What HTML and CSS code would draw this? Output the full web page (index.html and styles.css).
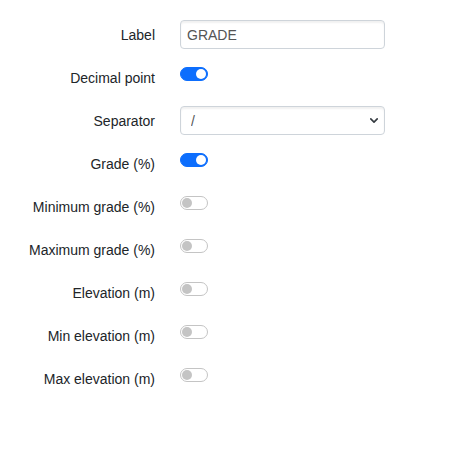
FILE: index.html
```html
<!DOCTYPE html>
<html lang="en">
<head>
    <meta charset="UTF-8">
    <meta name="viewport" content="width=device-width, initial-scale=1.0">
    <title>Grade settings</title>
    <link rel="stylesheet" href="styles.css">
</head>
<body>
    <form class="settings">
        <div class="row">
            <label class="row-label" for="label">Label</label>
            <input type="text" id="label" class="field" value="GRADE">
        </div>

        <div class="row">
            <label class="row-label" for="decimal">Decimal point</label>
            <input type="checkbox" id="decimal" class="switch" checked>
        </div>

        <div class="row">
            <label class="row-label" for="separator">Separator</label>
            <select id="separator" class="field select">
                <option>/</option>
                <option>:</option>
                <option>-</option>
            </select>
        </div>

        <div class="row">
            <label class="row-label" for="grade">Grade (%)</label>
            <input type="checkbox" id="grade" class="switch" checked>
        </div>

        <div class="row">
            <label class="row-label" for="min-grade">Minimum grade (%)</label>
            <input type="checkbox" id="min-grade" class="switch">
        </div>

        <div class="row">
            <label class="row-label" for="max-grade">Maximum grade (%)</label>
            <input type="checkbox" id="max-grade" class="switch">
        </div>

        <div class="row">
            <label class="row-label" for="elevation">Elevation (m)</label>
            <input type="checkbox" id="elevation" class="switch">
        </div>

        <div class="row">
            <label class="row-label" for="min-elevation">Min elevation (m)</label>
            <input type="checkbox" id="min-elevation" class="switch">
        </div>

        <div class="row">
            <label class="row-label" for="max-elevation">Max elevation (m)</label>
            <input type="checkbox" id="max-elevation" class="switch">
        </div>
    </form>
</body>
</html>
```

FILE: styles.css
```css
* {
    margin: 0;
    padding: 0;
    box-sizing: border-box;
}

body {
    font-family: 'Liberation Sans', Arial, sans-serif;
    font-size: 14px;
    color: #212529;
    background: white;
}

.settings {
    padding-top: 20px;
}

.row {
    display: grid;
    grid-template-columns: 155px 205px;
    column-gap: 25px;
    align-items: start;
    min-height: 29px;
    margin-bottom: 14px;
}

.row-label {
    text-align: right;
    line-height: 21px;
    padding: 5px 0 3px;
}

.field {
    width: 205px;
    height: 29px;
    padding: 0 6px;
    font-family: inherit;
    font-size: 14px;
    color: #555;
    background: white;
    border: 1px solid #ced4da;
    border-radius: 4px;
    box-shadow: inset 0 2px 2px rgba(0, 0, 0, 0.06);
    outline: none;
}

.select {
    appearance: none;
    -webkit-appearance: none;
    padding-left: 10px;
    background-image: url("data:image/svg+xml,%3Csvg xmlns='http://www.w3.org/2000/svg' viewBox='0 0 10 6'%3E%3Cpath d='M1 1l4 4 4-4' fill='none' stroke='%23343a40' stroke-width='2' stroke-linecap='round' stroke-linejoin='round'/%3E%3C/svg%3E");
    background-repeat: no-repeat;
    background-position: right 6px center;
    background-size: 8px 5px;
}

.switch {
    appearance: none;
    -webkit-appearance: none;
    position: relative;
    width: 28px;
    height: 14px;
    margin-top: 4px;
    border: 1px solid #c4c4c4;
    border-radius: 7px;
    background: white;
    cursor: pointer;
}

.switch::after {
    content: "";
    position: absolute;
    top: 1px;
    left: 1px;
    width: 10px;
    height: 10px;
    border-radius: 50%;
    background: #c4c4c4;
}

.switch:checked {
    background: #0d6efd;
    border-color: #0d6efd;
}

.switch:checked::after {
    left: auto;
    right: 1px;
    background: white;
}
```
